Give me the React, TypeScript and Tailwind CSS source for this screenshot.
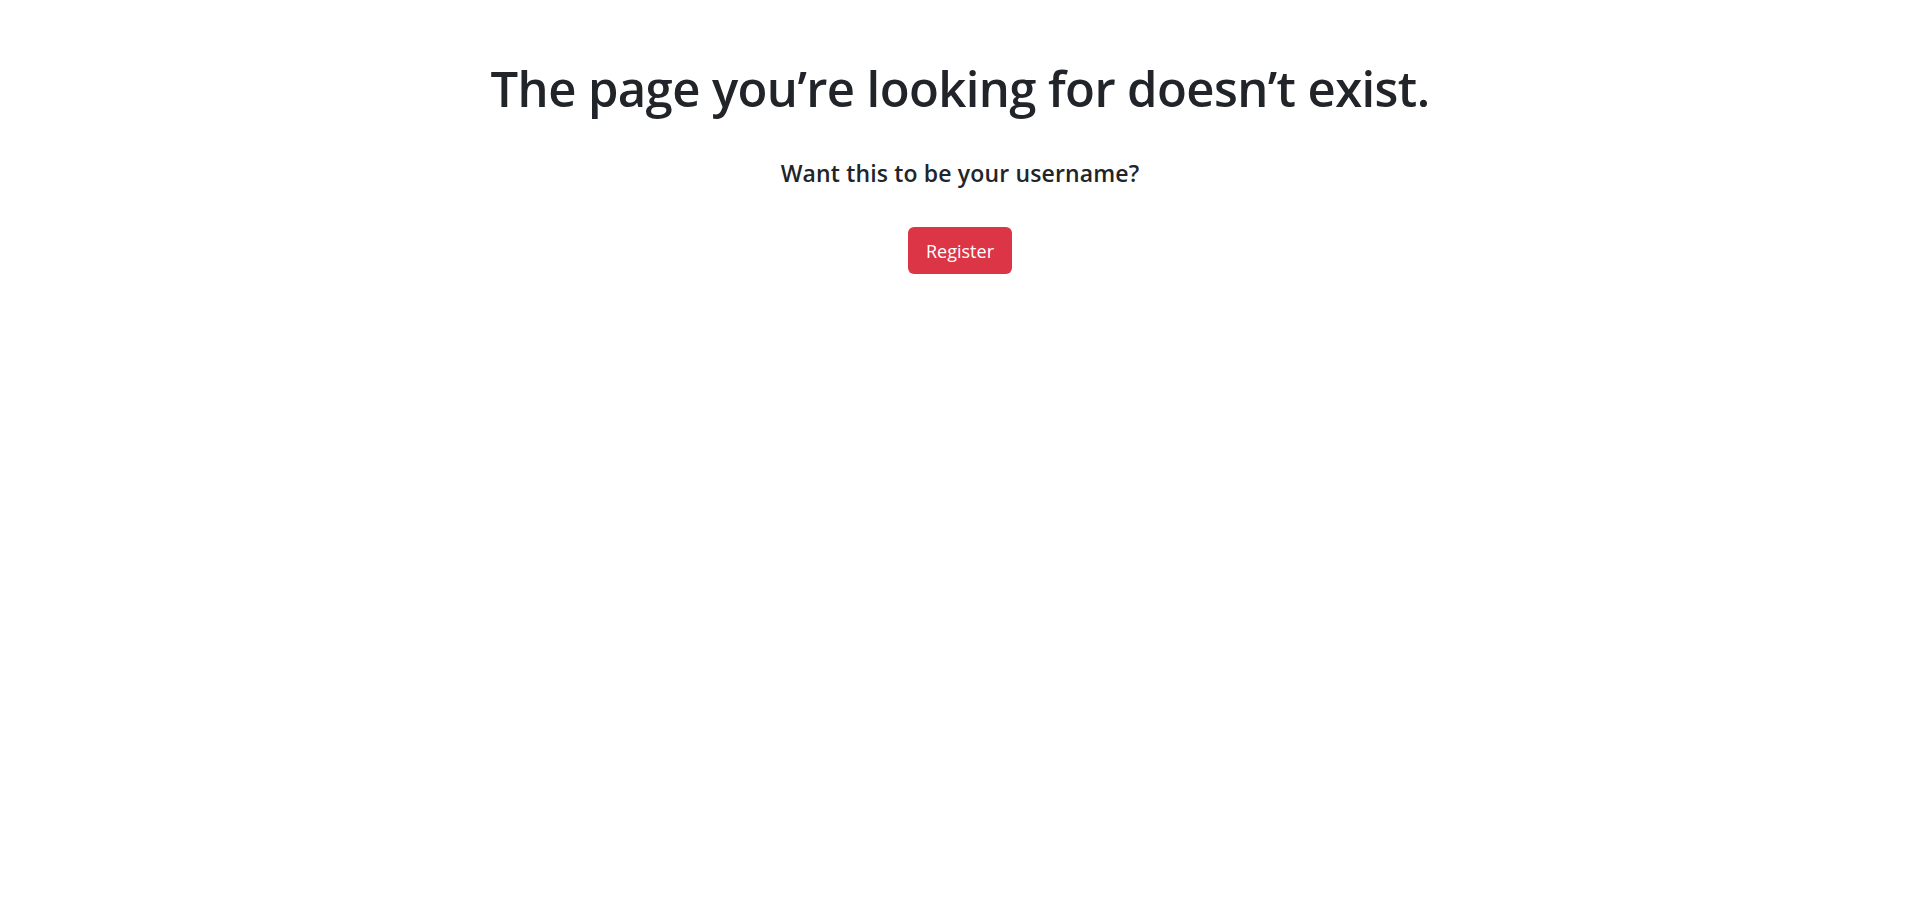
export default function App() {
  return (
    <div
      className="min-h-screen bg-white text-[#212529] text-center"
      style={{ fontFamily: '"Open Sans", "Noto Sans", sans-serif' }}
    >
      <div className="flex flex-col items-center pt-[59px]">
        <h1 className="text-[49px] leading-[1.2] font-semibold tracking-[-0.6px]">
          The page you’re looking for doesn’t exist.
        </h1>
        <h5 className="mt-[42px] text-[23px] leading-[1.2] font-semibold tracking-[0.15px]">
          Want this to be your username?
        </h5>
        <button className="mt-[40px] h-[47px] px-[18px] rounded-[6px] bg-[#dc3545] text-white text-[18px] leading-none">
          Register
        </button>
      </div>
    </div>
  );
}
